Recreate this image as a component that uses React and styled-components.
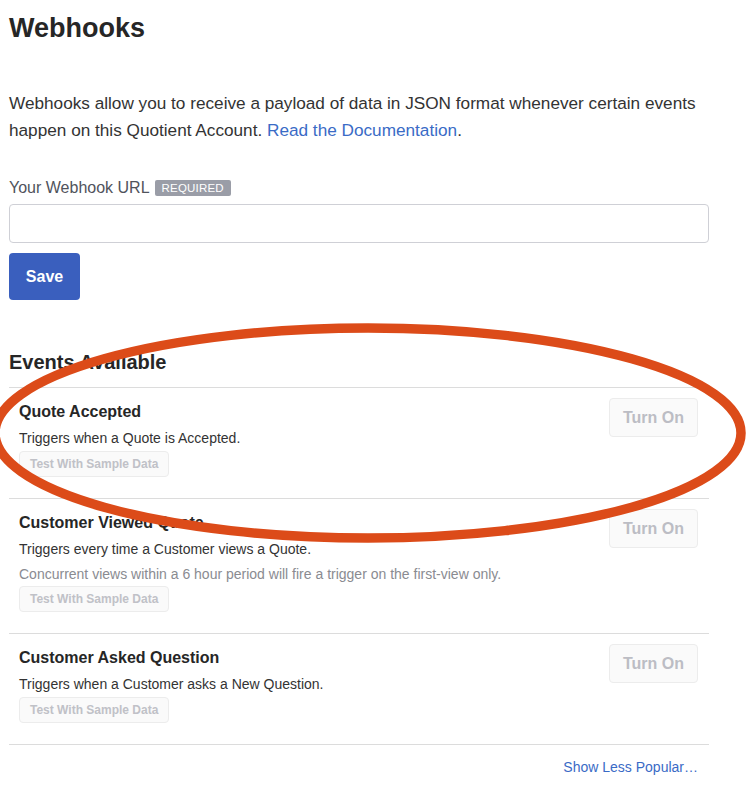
import React from 'react'
import styled, { createGlobalStyle } from 'styled-components'

const GlobalStyle = createGlobalStyle`
  html, body {
    margin: 0;
    padding: 0;
    background: #fff;
  }
  body {
    font-family: "Liberation Sans", Arial, sans-serif;
    color: #333;
  }
`

const events = [
  {
    title: 'Quote Accepted',
    desc: 'Triggers when a Quote is Accepted.'
  },
  {
    title: 'Customer Viewed Quote',
    desc: 'Triggers every time a Customer views a Quote.',
    note: 'Concurrent views within a 6 hour period will fire a trigger on the first-view only.'
  },
  {
    title: 'Customer Asked Question',
    desc: 'Triggers when a Customer asks a New Question.'
  }
]

const App = () => {
  return (
    <>
      <GlobalStyle />
      <Page>
        <Title>Webhooks</Title>
        <Intro>
          Webhooks allow you to receive a payload of data in JSON format whenever certain events
          happen on this Quotient Account. <Link href="#">Read the Documentation</Link>.
        </Intro>

        <Label>
          <span>Your Webhook URL</span>
          <Badge>Required</Badge>
        </Label>
        <UrlInput type="text" />
        <SaveButton>Save</SaveButton>

        <SectionTitle>Events Available</SectionTitle>
        <EventList>
          {events.map((ev) => (
            <EventRow key={ev.title}>
              <EventInfo>
                <EventTitle>{ev.title}</EventTitle>
                <EventDesc>{ev.desc}</EventDesc>
                {ev.note && <EventNote>{ev.note}</EventNote>}
                <TestButton>Test With Sample Data</TestButton>
              </EventInfo>
              <TurnOnButton>Turn On</TurnOnButton>
            </EventRow>
          ))}
        </EventList>
        <Footer>
          <Link href="#">Show Less Popular…</Link>
        </Footer>

        {/* hand-drawn annotation circling the first event */}
        <Annotation width="752" height="806" viewBox="0 0 752 806">
          <ellipse
            cx="368"
            cy="433"
            rx="373"
            ry="105"
            fill="none"
            stroke="#dc4b19"
            strokeWidth="9.5"
          />
        </Annotation>
      </Page>
    </>
  )
}

const Page = styled.div`
  position: relative;
  width: 700px;
  padding: 12px 9px 30px;
  min-height: 764px;
`

const Title = styled.h1`
  margin: 0;
  font-size: 27px;
  line-height: 32px;
  font-weight: bold;
  color: #262626;
`

const Intro = styled.p`
  margin: 46px 0 0;
  font-size: 17.2px;
  line-height: 27px;
  color: #333;
`

const Link = styled.a`
  color: #3a6bc6;
  text-decoration: none;
`

const Label = styled.div`
  display: flex;
  align-items: center;
  gap: 5px;
  margin-top: 34px;
  font-size: 16px;
  line-height: 20px;
  color: #50535c;
`

const Badge = styled.span`
  display: inline-block;
  background: #9a9da7;
  color: #fff;
  font-size: 11.5px;
  line-height: 16px;
  padding: 0 7px;
  border-radius: 2px;
  text-transform: uppercase;
  letter-spacing: 0.2px;
`

const UrlInput = styled.input`
  display: block;
  box-sizing: border-box;
  width: 700px;
  height: 39px;
  margin-top: 6px;
  border: 1px solid #cfd0d6;
  border-radius: 4px;
  outline: none;
`

const SaveButton = styled.button`
  display: block;
  margin-top: 10px;
  height: 47px;
  width: 71px;
  border: none;
  border-radius: 4px;
  background: #3a5fbe;
  color: #fff;
  font-family: inherit;
  font-size: 16px;
  font-weight: bold;
`

const SectionTitle = styled.h2`
  margin: 50px 0 0;
  font-size: 20px;
  line-height: 24px;
  font-weight: bold;
  color: #262626;
  padding-bottom: 13px;
  border-bottom: 1px solid #dcdcdc;
`

const EventList = styled.div`
  display: flex;
  flex-direction: column;
`

const EventRow = styled.div`
  display: flex;
  justify-content: space-between;
  align-items: flex-start;
  padding: 10px 11px 21px 10px;
  border-bottom: 1px solid #dcdcdc;
`

const EventInfo = styled.div`
  display: flex;
  flex-direction: column;
  align-items: flex-start;
  padding-top: 2px;
`

const EventTitle = styled.div`
  font-size: 16px;
  line-height: 24px;
  font-weight: bold;
  color: #262626;
  margin-bottom: 2px;
`

const EventDesc = styled.div`
  font-size: 14px;
  line-height: 24px;
  color: #333;
  margin-bottom: 1px;
`

const EventNote = styled(EventDesc)`
  color: #8a8b91;
  margin-bottom: 0;
`

const TestButton = styled.button`
  height: 26px;
  padding: 0 10px;
  border: 1px solid #ececec;
  border-radius: 4px;
  background: #fafafa;
  color: #c0c1c7;
  font-family: inherit;
  font-size: 12px;
  font-weight: bold;
`

const TurnOnButton = styled.button`
  height: 39px;
  width: 89px;
  border: 1px solid #ececec;
  border-radius: 4px;
  background: #fafafa;
  color: #bcbdc4;
  font-family: inherit;
  font-size: 16px;
  font-weight: bold;
`

const Footer = styled.div`
  display: flex;
  justify-content: flex-end;
  padding-right: 11px;
  margin-top: 12px;
  font-size: 14px;
  line-height: 20px;
`

const Annotation = styled.svg`
  position: absolute;
  top: 0;
  left: 0;
  pointer-events: none;
  overflow: visible;
`

export default App
